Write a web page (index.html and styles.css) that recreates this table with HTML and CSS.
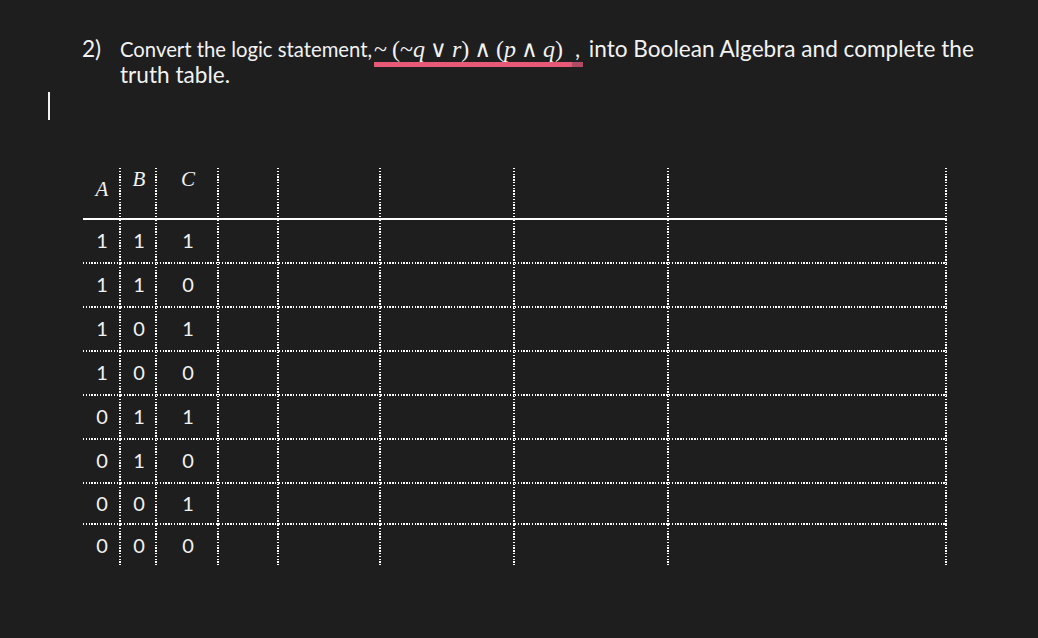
FILE: index.html
```html
<!DOCTYPE html>
<html lang="en">
<head>
<meta charset="utf-8">
<title>Truth table</title>
<link rel="stylesheet" href="styles.css">
</head>
<body>
<main class="page">
  <div class="question">
    <span class="num">2)</span>
    <p class="text"><span class="lead">Convert the logic statement,</span><span class="math mark">~ (~<i>q</i> <span class="op">∨</span> <i>r</i>) <span class="op">∧</span> (<i>p</i> <span class="op">∧</span> <i>q</i>)</span><span class="mark-end">,</span> into Boolean Algebra and complete the<br>truth table.</p>
  </div>
  <div class="cursor"></div>
  <table class="truth">
    <colgroup>
      <col class="c1"><col class="c2"><col class="c3"><col class="c4"><col class="c5"><col class="c6"><col class="c7"><col class="c8">
    </colgroup>
    <thead>
      <tr>
        <th class="var low">A</th><th class="var">B</th><th class="var">C</th><th></th><th></th><th></th><th></th><th></th>
      </tr>
    </thead>
    <tbody>
      <tr class="r44"><td>1</td><td>1</td><td>1</td><td></td><td></td><td></td><td></td><td></td></tr>
      <tr class="r44"><td>1</td><td>1</td><td>0</td><td></td><td></td><td></td><td></td><td></td></tr>
      <tr class="r44"><td>1</td><td>0</td><td>1</td><td></td><td></td><td></td><td></td><td></td></tr>
      <tr class="r44"><td>1</td><td>0</td><td>0</td><td></td><td></td><td></td><td></td><td></td></tr>
      <tr class="r44"><td>0</td><td>1</td><td>1</td><td></td><td></td><td></td><td></td><td></td></tr>
      <tr class="r44"><td>0</td><td>1</td><td>0</td><td></td><td></td><td></td><td></td><td></td></tr>
      <tr class="r41"><td>0</td><td>0</td><td>1</td><td></td><td></td><td></td><td></td><td></td></tr>
      <tr class="r40 last"><td>0</td><td>0</td><td>0</td><td></td><td></td><td></td><td></td><td></td></tr>
    </tbody>
  </table>
</main>
</body>
</html>
```

FILE: styles.css
```css
html, body {
  margin: 0;
  padding: 0;
  background: #1e1e1e;
}
body {
  width: 1038px;
  height: 638px;
  overflow: hidden;
  color: #f2f2f2;
  font-family: Lato, "Liberation Sans", sans-serif;
}
.page {
  display: flex;
  flex-direction: column;
  padding-top: 36px;
}
.question {
  display: flex;
  margin-left: 82px;
  font-size: 22.6px;
  line-height: 26px;
}
.num {
  width: 38px;
  flex: none;
}
.text {
  margin: 0;
  white-space: nowrap;
}
.lead {
  font-size: 20.3px;
  line-height: 1;
}
.math {
  font-family: "Liberation Serif", "DejaVu Serif", serif;
  font-size: 24px;
  line-height: 1;
  margin-left: 2px;
  word-spacing: -1px;
}
.math i {
  font-style: italic;
}
.op {
  font-family: "DejaVu Serif", serif;
  font-size: 23px;
  line-height: 1;
}
.mark {
  border-bottom: 5px solid #e65a78;
  padding-right: 9px;
}
.mark-end {
  border-bottom: 5px solid #b04b64;
  padding-left: 3px;
  padding-right: 3px;
  line-height: 1;
}
.cursor {
  margin-left: 48px;
  margin-top: 4px;
  width: 2px;
  height: 28px;
  background: #f2f2f2;
}
.truth {
  margin-top: 48px;
  margin-left: 83px;
  border-collapse: separate;
  border-spacing: 0;
  table-layout: fixed;
  width: 864px;
  font-size: 20px;
}
.c1 { width: 38px; }
.c2 { width: 36px; }
.c3 { width: 62px; }
.c4 { width: 60px; }
.c5 { width: 102px; }
.c6 { width: 134px; }
.c7 { width: 154px; }
.c8 { width: 278px; }
.truth th,
.truth td {
  box-sizing: border-box;
  padding: 0;
  text-align: center;
  background-image:
    repeating-linear-gradient(to bottom, #ffffff 0 1.4px, transparent 1.4px 2.8px),
    repeating-linear-gradient(to right, #ffffff 0 1.4px, transparent 1.4px 2.8px);
  background-size: 2px 100%, 100% 2px;
  background-position: right top, left bottom;
  background-repeat: no-repeat, no-repeat;
}
.truth thead th {
  height: 52px;
  border-bottom: 2px solid #ffffff;
  background-image: repeating-linear-gradient(to bottom, #ffffff 0 1.4px, transparent 1.4px 2.8px);
  background-size: 2px 100%;
  background-position: right top;
  background-repeat: no-repeat;
  vertical-align: top;
  font-weight: normal;
}
.truth thead th.var {
  font-family: "Liberation Serif", "DejaVu Serif", serif;
  font-style: italic;
  font-size: 21px;
  line-height: 20px;
  padding-top: 1px;
}
.truth thead th.low {
  vertical-align: bottom;
  padding-top: 0;
  padding-bottom: 19px;
}
.truth td {
  vertical-align: middle;
  line-height: 24px;
}
.r44 td { height: 44px; padding-bottom: 5px; }
.r41 td { height: 41px; padding-bottom: 3px; }
.r40 td { height: 40px; }
.truth tr.last td {
  background-image: repeating-linear-gradient(to bottom, #ffffff 0 1.4px, transparent 1.4px 2.8px);
  background-size: 2px 100%;
  background-position: right top;
  background-repeat: no-repeat;
}
```
